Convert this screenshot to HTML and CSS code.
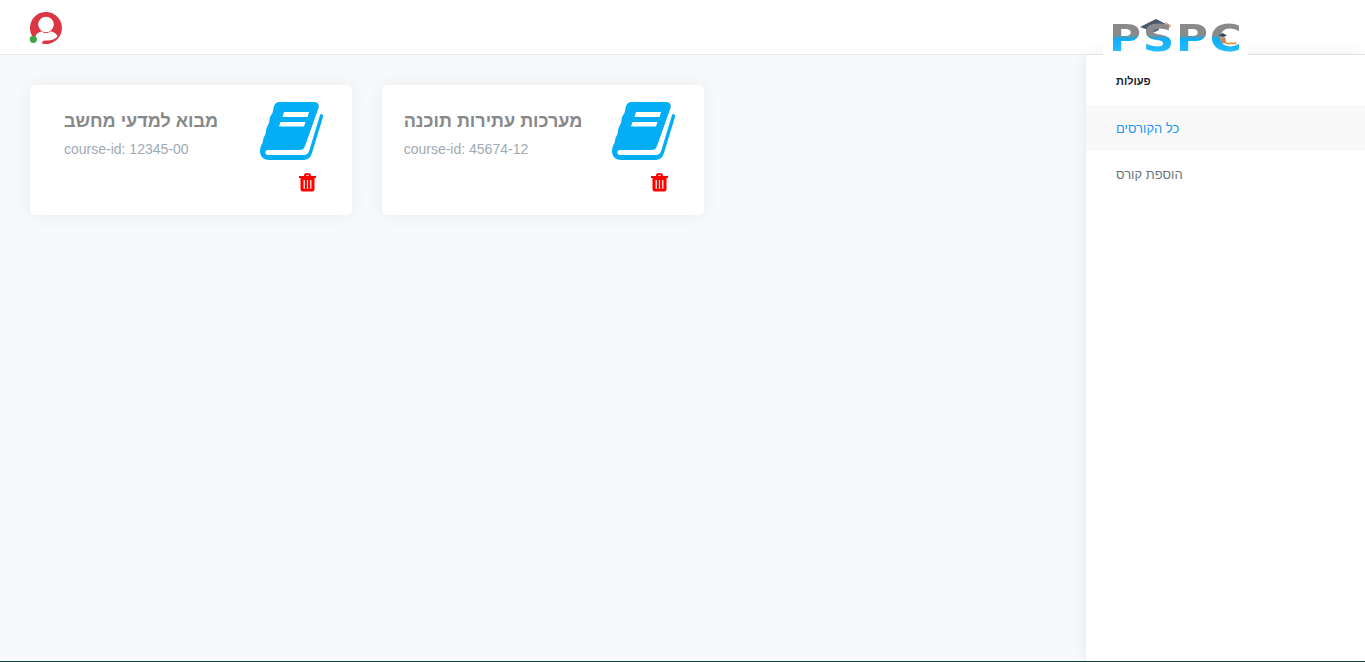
FILE: index.html
```html
<!DOCTYPE html>
<html lang="he">
  <head>
    <title>PSPC | כל הקורסים</title>
    <meta name="viewport" content="width=device-width, initial-scale=1" />
    <link rel="stylesheet" href="styles.css">
  </head>

  <body>
    <header class="topbar">
      <a class="avatar" href="#">
        <svg width="36" height="36" viewBox="0 0 36 36">
          <path d="M5.1 24 A16 16 0 1 1 15 31.5 L16 28 L7 27 Z" fill="#dc3545" />
          <circle cx="19" cy="12.5" r="7.8" fill="#fff" />
          <path d="M8.5 24 C10 20.5 14 19.5 15 19.5 C17 21.5 21 21.5 23 19.5 C26 19.5 29.5 21 30.5 24.5 C27 28.5 22 28.5 18 28.5 L16 29 L8 28 Z" fill="#fff" />
          <circle cx="6.3" cy="27.3" r="3.6" fill="#3fa648" />
        </svg>
      </a>
      <div class="logo">
        <svg class="logo-cap" width="36" height="18" viewBox="0 0 36 18">
          <path d="M0 10 L16 2 L26 7 L11 14 Z" fill="#47596b" />
          <path d="M6 12 L7 16 Q13 17 19 13 L19 10 L11 14 Z" fill="#5d6f80" />
          <path d="M25 5 L31 8 L30 11 L26 8 Z" fill="#e8a58f" />
        </svg>
        <span class="logo-text">PSPC</span>
        <svg class="logo-student" width="20" height="12" viewBox="0 0 22 14">
          <path d="M1 3 L6 0 L11 3 L6 5 Z" fill="#3c4c58" />
          <path d="M3 5 H9 L10 12 H4 Z" fill="#c98a55" />
          <path d="M10 11 H22 V13 H9 Z" fill="#e0904a" />
        </svg>
      </div>
    </header>

    <div class="layout">
      <main class="courses">
        <article class="card">
          <div class="card-text">
            <div>
              <h2>מבוא למדעי מחשב</h2>
              <p>course-id: 12345-00</p>
            </div>
          </div>
          <div class="card-icons">
            <svg class="book" width="64" height="58" viewBox="0 0 64 58">
              <path d="M19 0 H54 C58 0 59.5 3 58.5 6 L45 44 C44 47 42 48 39 48 H8 C4.5 48 4.5 53 8 53 H44 C47 53 48.5 51 49.5 48 L60 13 C61 11 63.6 12 63 15 L52 51 C50.5 56 47 58 43 58 H9 C3 58 0 54 0 49 C0 46 1 43 2.5 41 L3.5 36 L5.5 32 L6.5 26 L9 21 L10 15 L12.5 11 L14 4 Q16 0 19 0 Z" fill="#03aef6" />
              <path d="M24 10 H49 L47.5 15 H22.5 Z M20.5 20 H45.5 L44 24.5 H19 Z" fill="#fff" />
            </svg>
            <svg class="trash" width="17" height="19" viewBox="0 0 17 19">
              <path d="M0 4 H17 M5.5 4 L6.5 1.2 H10.5 L11.5 4" fill="none" stroke="#f00" stroke-width="2" />
              <path d="M1.5 4 H15.5 V16 Q15.5 18.5 13 18.5 H4 Q1.5 18.5 1.5 16 Z" fill="#f00" />
              <path d="M5.2 7 V15.8 M8.5 7 V15.8 M11.8 7 V15.8" fill="none" stroke="#fff" stroke-width="1.2" />
            </svg>
          </div>
        </article>

        <article class="card">
          <div class="card-text">
            <div>
              <h2>מערכות עתירות תוכנה</h2>
              <p>course-id: 45674-12</p>
            </div>
          </div>
          <div class="card-icons">
            <svg class="book" width="64" height="58" viewBox="0 0 64 58">
              <path d="M19 0 H54 C58 0 59.5 3 58.5 6 L45 44 C44 47 42 48 39 48 H8 C4.5 48 4.5 53 8 53 H44 C47 53 48.5 51 49.5 48 L60 13 C61 11 63.6 12 63 15 L52 51 C50.5 56 47 58 43 58 H9 C3 58 0 54 0 49 C0 46 1 43 2.5 41 L3.5 36 L5.5 32 L6.5 26 L9 21 L10 15 L12.5 11 L14 4 Q16 0 19 0 Z" fill="#03aef6" />
              <path d="M24 10 H49 L47.5 15 H22.5 Z M20.5 20 H45.5 L44 24.5 H19 Z" fill="#fff" />
            </svg>
            <svg class="trash" width="17" height="19" viewBox="0 0 17 19">
              <path d="M0 4 H17 M5.5 4 L6.5 1.2 H10.5 L11.5 4" fill="none" stroke="#f00" stroke-width="2" />
              <path d="M1.5 4 H15.5 V16 Q15.5 18.5 13 18.5 H4 Q1.5 18.5 1.5 16 Z" fill="#f00" />
              <path d="M5.2 7 V15.8 M8.5 7 V15.8 M11.8 7 V15.8" fill="none" stroke="#fff" stroke-width="1.2" />
            </svg>
          </div>
        </article>
      </main>

      <aside class="sidebar">
        <div class="sidebar-title">פעולות</div>
        <a class="sidebar-item active" href="#">כל הקורסים</a>
        <a class="sidebar-item" href="#">הוספת קורס</a>
      </aside>
    </div>
  </body>
</html>
```

FILE: styles.css
```css
html,
body {
  height: 100%;
}

body {
  margin: 0;
  display: flex;
  flex-direction: column;
  box-sizing: border-box;
  border-bottom: 1px solid #123f45;
  background: #f8f9fa;
  font-family: "Liberation Sans", Arial, sans-serif;
}

a {
  text-decoration: none;
}

.topbar {
  flex: none;
  height: 54px;
  display: flex;
  justify-content: space-between;
  padding: 0 117px 0 27px;
  background: #fff;
  border-bottom: 1px solid #e8eaec;
}

.avatar {
  display: block;
  padding-top: 12px;
}

.logo {
  position: relative;
  width: 145px;
  height: 55px;
  box-sizing: border-box;
  padding: 20px 0 0 6px;
  background: #fff;
}

.logo-cap {
  position: absolute;
  left: 37px;
  top: 17px;
}

.logo-student {
  position: absolute;
  left: 114px;
  top: 33px;
}

.logo-text {
  display: block;
  font-family: "DejaVu Sans", sans-serif;
  font-size: 37px;
  line-height: 37px;
  font-weight: bold;
  letter-spacing: 1.5px;
  color: transparent;
  background: linear-gradient(to bottom, #8a8a8a 0, #8a8a8a 40%, #0aaef8 52%, #35c4ff 100%);
  -webkit-background-clip: text;
  background-clip: text;
  transform: scaleX(1.18);
  transform-origin: left;
  filter: blur(0.4px);
}

.layout {
  flex: 1;
  display: flex;
  min-height: 0;
}

.courses {
  flex: 1;
  display: flex;
  align-items: flex-start;
  gap: 30px;
  padding: 30px;
}

.card {
  width: 322px;
  height: 130px;
  display: flex;
  background: #fff;
  border-radius: 5px;
  box-shadow: 0 0 20px rgba(0, 0, 0, 0.06);
}

.card-text {
  width: 222px;
  display: flex;
  justify-content: center;
  padding-top: 26px;
}

.card-text h2 {
  margin: 0;
  font-size: 18px;
  line-height: 21px;
  font-weight: bold;
  color: #888;
}

.card-text p {
  margin: 9px 0 0;
  font-size: 14px;
  line-height: 16px;
  color: #a0aab4;
}

.card-icons {
  width: 100px;
  display: flex;
  flex-direction: column;
  padding: 17px 0 0 8px;
  box-sizing: border-box;
}

.trash {
  margin: 13px 0 0 39px;
}

.sidebar {
  flex: none;
  width: 279px;
  background: #fff;
  box-shadow: 0 0 15px rgba(0, 0, 0, 0.08);
}

.sidebar-title {
  height: 50px;
  line-height: 52px;
  padding-left: 30px;
  font-size: 11px;
  font-weight: bold;
  color: #1a2330;
}

.sidebar-item {
  display: block;
  height: 46px;
  line-height: 48px;
  padding-left: 30px;
  font-size: 13px;
  color: #6c757d;
}

.sidebar-item.active {
  background: #f9f9f9;
  color: #2196f3;
}
```
